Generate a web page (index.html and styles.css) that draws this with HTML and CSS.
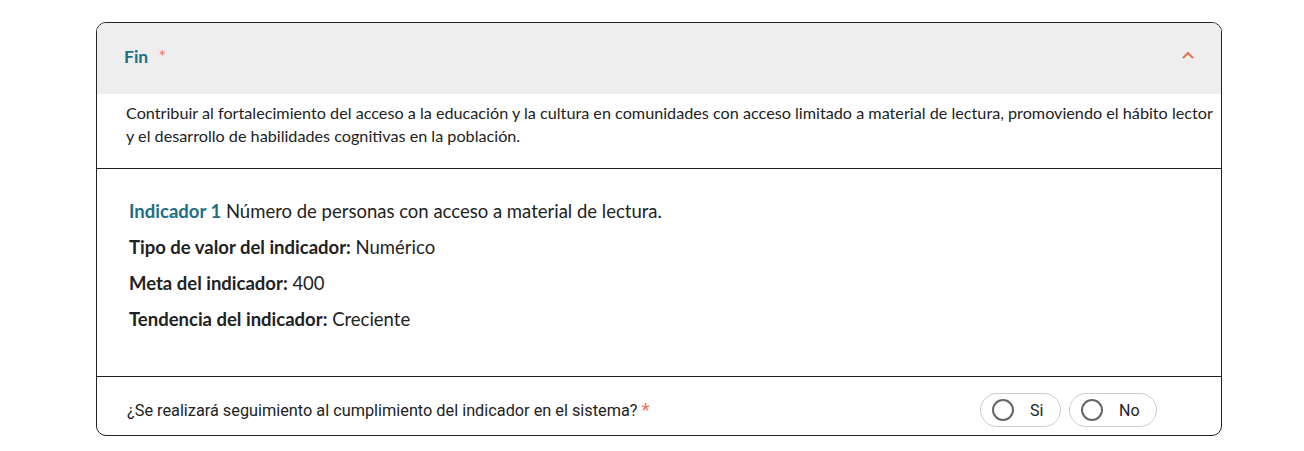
FILE: index.html
```html
<!DOCTYPE html>
<html lang="es">
<head>
<meta charset="utf-8">
<link rel="stylesheet" href="styles.css">
</head>
<body>
<div class="card">
  <div class="card-header">
    <div class="title">Fin <span class="req">*</span></div>
    <svg class="chev" width="14" height="10" viewBox="0 0 14 10"><path d="M2 8 L7 3 L12 8" fill="none" stroke="#e8704f" stroke-width="2"/></svg>
  </div>
  <div class="desc">Contribuir al fortalecimiento del acceso a la educación y la cultura en comunidades con acceso limitado a material de lectura, promoviendo el hábito lector y el desarrollo de habilidades cognitivas en la población.</div>
  <div class="indicator">
    <p><span class="ind-label">Indicador 1</span> Número de personas con acceso a material de lectura.</p>
    <p><b>Tipo de valor del indicador:</b> Numérico</p>
    <p><b>Meta del indicador:</b> 400</p>
    <p><b>Tendencia del indicador:</b> Creciente</p>
  </div>
  <div class="question">
    <div class="q-text">¿Se realizará seguimiento al cumplimiento del indicador en el sistema? <span class="req">*</span></div>
    <div class="options">
      <label class="pill pill-si"><span class="radio"></span><span>Si</span></label>
      <label class="pill pill-no"><span class="radio"></span><span>No</span></label>
    </div>
  </div>
</div>
</body>
</html>
```
FILE: styles.css
```css
html, body { margin: 0; padding: 0; background: #fff; }
body { padding: 22px 0 0 96px; }
.card {
  width: 1124px;
  border: 1px solid #222;
  border-radius: 10px;
  overflow: hidden;
  font-family: Lato, "Open Sans", sans-serif;
  color: #222;
}
.card-header {
  background: #eeeeee;
  height: 71px;
  display: flex;
  align-items: center;
  justify-content: space-between;
  padding: 0 26px 0 27px;
}
.title {
  font-weight: 700;
  font-size: 17.5px;
  color: #1d7082;
  margin-top: -5px;
}
.title .req { color: #f0735a; font-weight: 400; margin-left: 6px; font-size: 18px; }
.chev { margin-top: -8px; }
.desc {
  font-size: 16.2px;
  line-height: 23px;
  padding: 7px 2px 21px 29px;
  border-bottom: 1px solid #222;
}
.indicator {
  padding: 31px 32px 46px 32px;
  border-bottom: 1px solid #222;
  font-size: 18.5px;
}
.indicator p { margin: 0; line-height: 22px; }
.indicator p + p { margin-top: 14px; }
.indicator b { font-weight: 700; }
.ind-label { color: #1d7082; font-weight: 700; }
.question {
  height: 58px;
  display: flex;
  align-items: center;
  justify-content: space-between;
  padding: 0 64px 0 30px;
}
.q-text {
  font-family: Roboto, sans-serif;
  font-size: 16.3px;
  color: #222;
  padding-top: 7px;
}
.q-text .req { color: #f0735a; font-size: 19px; }
.options { display: flex; gap: 8px; padding-top: 8px; }
.pill {
  display: flex;
  align-items: center;
  height: 32px;
  border: 1px solid #ccc;
  border-radius: 17px;
  padding: 0 0 0 11px;
  font-family: Roboto, sans-serif;
  font-size: 16px;
  color: #222;
  box-sizing: content-box;
}
.pill-si { width: 68px; }
.pill-no { width: 75px; }
.radio {
  width: 18px;
  height: 18px;
  border: 2px solid #666;
  border-radius: 50%;
  margin-right: 16px;
}
```
